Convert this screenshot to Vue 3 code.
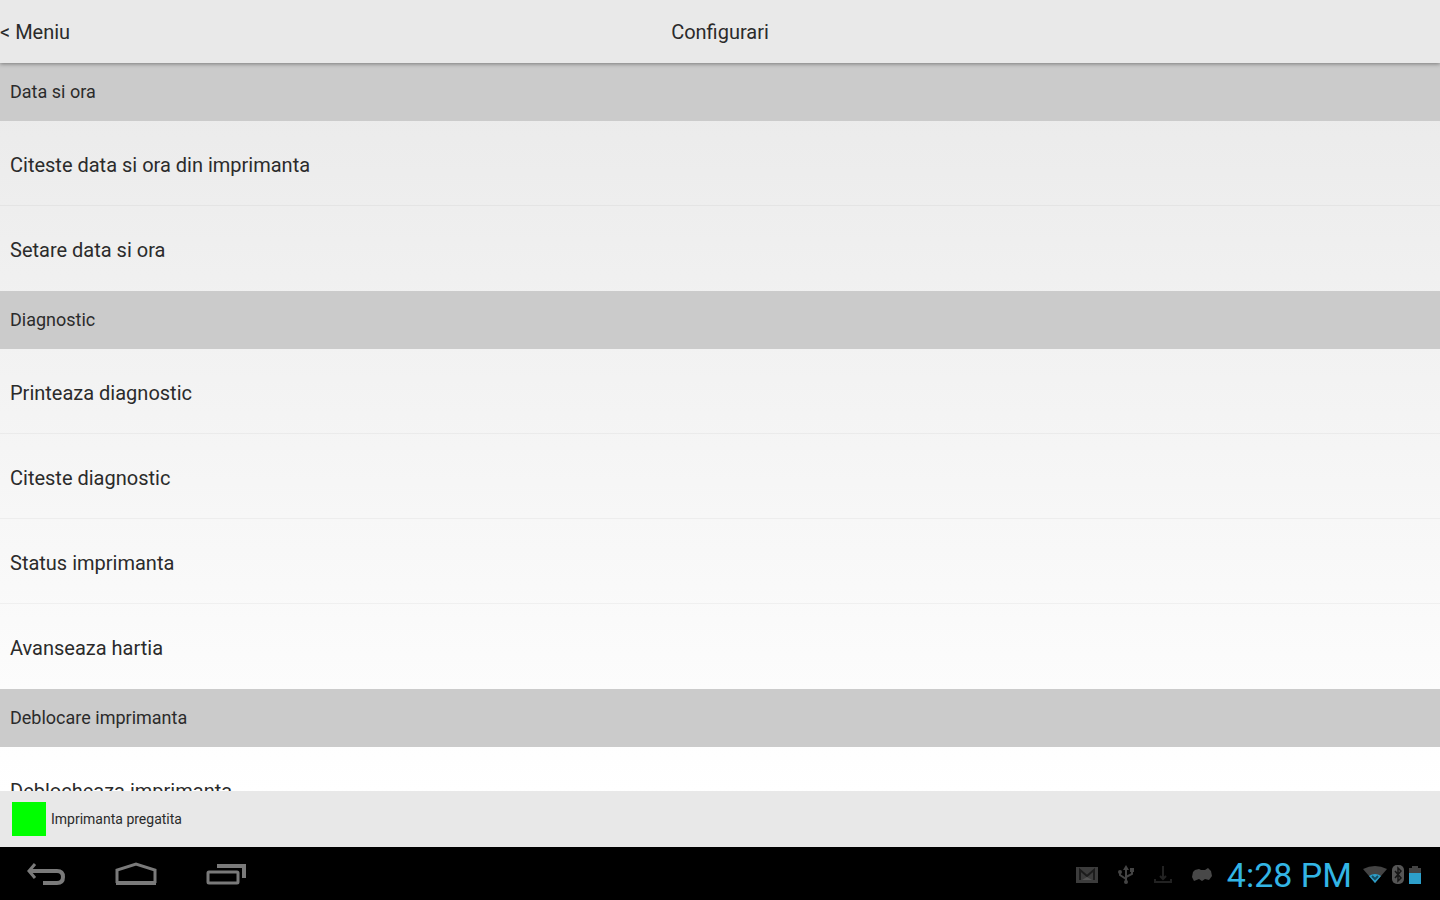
<template>
  <div class="tablet">
    <header class="top-bar">
      <button class="back-btn" type="button">&lt; Meniu</button>
      <h1>Configurari</h1>
    </header>

    <main class="settings">
      <section v-for="group in groups" :key="group.title">
        <h2>{{ group.title }}</h2>
        <ul>
          <li v-for="item in group.items" :key="item">
            <button class="row" type="button">{{ item }}</button>
          </li>
        </ul>
      </section>
    </main>

    <footer class="printer-status">
      <span class="status-light"></span>
      <span>Imprimanta pregatita</span>
    </footer>

    <!-- Android system bar -->
    <nav class="system-bar">
      <div class="nav-keys">
        <button type="button" aria-label="Back">
          <svg width="42" height="26" viewBox="0 0 42 26">
            <path d="M10 2 L4 9 L10 16" />
            <path class="thick" d="M5 9 H32 Q38 9 38 15 Q38 21 32 21 H18" />
          </svg>
        </button>
        <button type="button" aria-label="Home">
          <svg width="42" height="26" viewBox="0 0 42 26">
            <path d="M2 21 V8 L21 2 L40 8 V21" />
            <path class="thick" d="M1 21 H41" />
          </svg>
        </button>
        <button type="button" aria-label="Recent apps">
          <svg width="42" height="26" viewBox="0 0 42 26">
            <rect x="3" y="10" width="30" height="11" rx="1" />
            <path class="thick" d="M12 4 H39 V16" />
          </svg>
        </button>
      </div>

      <div class="tray">
        <div class="notices">
          <svg width="22" height="20" viewBox="0 0 22 20">
            <rect x="0" y="2" width="22" height="16" fill="#3c3c3c" />
            <path d="M4 15 V5 L11 11 L18 5 V15" fill="none" stroke="#1c1c1c" stroke-width="2" />
            <path d="M6 15 L11 12 L16 15 Z" fill="#555" />
          </svg>
          <svg width="16" height="20" viewBox="0 0 16 20">
            <path d="M8 3 V17 M2 7 V10 L8 14 M14 5 V9 L8 12" fill="none" stroke="#444" stroke-width="2" />
            <path d="M5 5 L8 0 L11 5 Z" fill="#444" />
            <circle cx="8" cy="17" r="2" fill="#444" />
            <circle cx="2" cy="7" r="2" fill="#444" />
            <rect x="12" y="3" width="4" height="4" fill="#444" />
          </svg>
          <svg width="18" height="20" viewBox="0 0 18 20">
            <path d="M9 1 V13 M6 11 L9 14 L12 11 M1 14 V17 H17 V14" fill="none" stroke="#222" stroke-width="2" />
          </svg>
          <svg width="20" height="20" viewBox="0 0 20 20">
            <path d="M3 5 L7 4 L9 5 H13 L16 3 L19 6 L20 11 L17 15 L13 14 L10 16 L7 14 L2 16 L0 12 L1 7 Z" fill="#484848" />
          </svg>
        </div>
        <time class="clock">4:28 PM</time>
        <div class="radios">
          <svg width="24" height="20" viewBox="0 0 24 20">
            <path d="M0 4 Q12 -2 24 4 L12 18 Z" fill="#444" />
            <path d="M6 11 Q12 7 18 11 L12 18 Z" fill="#2d9fca" />
            <path d="M9 11 L12 14 L15 11" fill="none" stroke="#164e63" stroke-width="2" />
          </svg>
          <svg width="12" height="20" viewBox="0 0 12 20">
            <rect x="0" y="0" width="12" height="19" rx="5" fill="#555" />
            <path d="M3 6 L9 13 L6 16 V3 L9 6 L3 13" fill="none" stroke="#151515" stroke-width="1.500" />
          </svg>
          <svg width="12" height="20" viewBox="0 0 12 20">
            <path d="M0 3 H3 V1 H9 V3 H12 V19 H0 Z" fill="#444" />
            <rect x="0" y="8" width="12" height="11" fill="#2d9fca" />
          </svg>
        </div>
      </div>
    </nav>
  </div>
</template>

<script setup>
const groups = [
  {
    title: 'Data si ora',
    items: ['Citeste data si ora din imprimanta', 'Setare data si ora']
  },
  {
    title: 'Diagnostic',
    items: ['Printeaza diagnostic', 'Citeste diagnostic', 'Status imprimanta', 'Avanseaza hartia']
  },
  {
    title: 'Deblocare imprimanta',
    items: ['Deblocheaza imprimanta']
  }
]
</script>

<style>
body {
  margin: 0;
  background: #000;
}
</style>

<style scoped>
.tablet {
  display: flex;
  flex-direction: column;
  height: 100vh;
  background: linear-gradient(#e8e8e8, #fff 88%);
  color: #2b2b2b;
  font-family: Roboto, "Liberation Sans", sans-serif;
}

button {
  border: none;
  background: none;
  color: inherit;
  font: inherit;
  cursor: pointer;
}

.top-bar {
  display: grid;
  grid-template-columns: 1fr auto 1fr;
  align-items: center;
  flex: none;
  height: 63px;
  background: #e9e9e9;
  font-size: 20px;
  z-index: 1;
  box-shadow: 0 1px 4px rgba(0, 0, 0, 0.4);
}

.back-btn {
  justify-self: start;
  padding: 0;
}

h1 {
  margin: 0;
  font-size: 20px;
  font-weight: 400;
}

.settings {
  flex: 1;
  min-height: 0;
  overflow: hidden;
}

h2 {
  margin: 0;
  padding: 0 10px;
  background: #cbcbcb;
  font-size: 18px;
  font-weight: 400;
  line-height: 58px;
}

ul {
  margin: 0;
  padding: 0;
  list-style: none;
}

li + li {
  box-shadow: 0 -1px 0 rgba(0, 0, 0, 0.04);
}

.row {
  display: block;
  width: 100%;
  padding: 3px 10px 0;
  font-size: 20px;
  line-height: 82px;
  text-align: left;
}

.printer-status {
  display: flex;
  align-items: center;
  flex: none;
  gap: 5px;
  height: 56px;
  padding: 0 12px;
  background: #e8e8e8;
  font-size: 14px;
}

.status-light {
  width: 34px;
  height: 34px;
  background: #0f0;
}

.system-bar {
  display: flex;
  align-items: center;
  justify-content: space-between;
  flex: none;
  box-sizing: border-box;
  height: 53px;
  padding: 3px 19px 0 25px;
  background: #000;
}

.nav-keys {
  display: flex;
  gap: 48px;
}

.nav-keys button {
  display: flex;
  padding: 0;
}

.nav-keys path,
.nav-keys rect {
  fill: none;
  stroke: #7a7a7a;
  stroke-width: 3;
}

.nav-keys .thick {
  stroke-width: 4;
}

.tray,
.notices,
.radios {
  display: flex;
  align-items: center;
}

.notices {
  gap: 20px;
}

.radios {
  gap: 5px;
}

.clock {
  margin: 0 11px 0 15px;
  color: #33b5e5;
  font-size: 34px;
  line-height: 50px;
}
</style>
